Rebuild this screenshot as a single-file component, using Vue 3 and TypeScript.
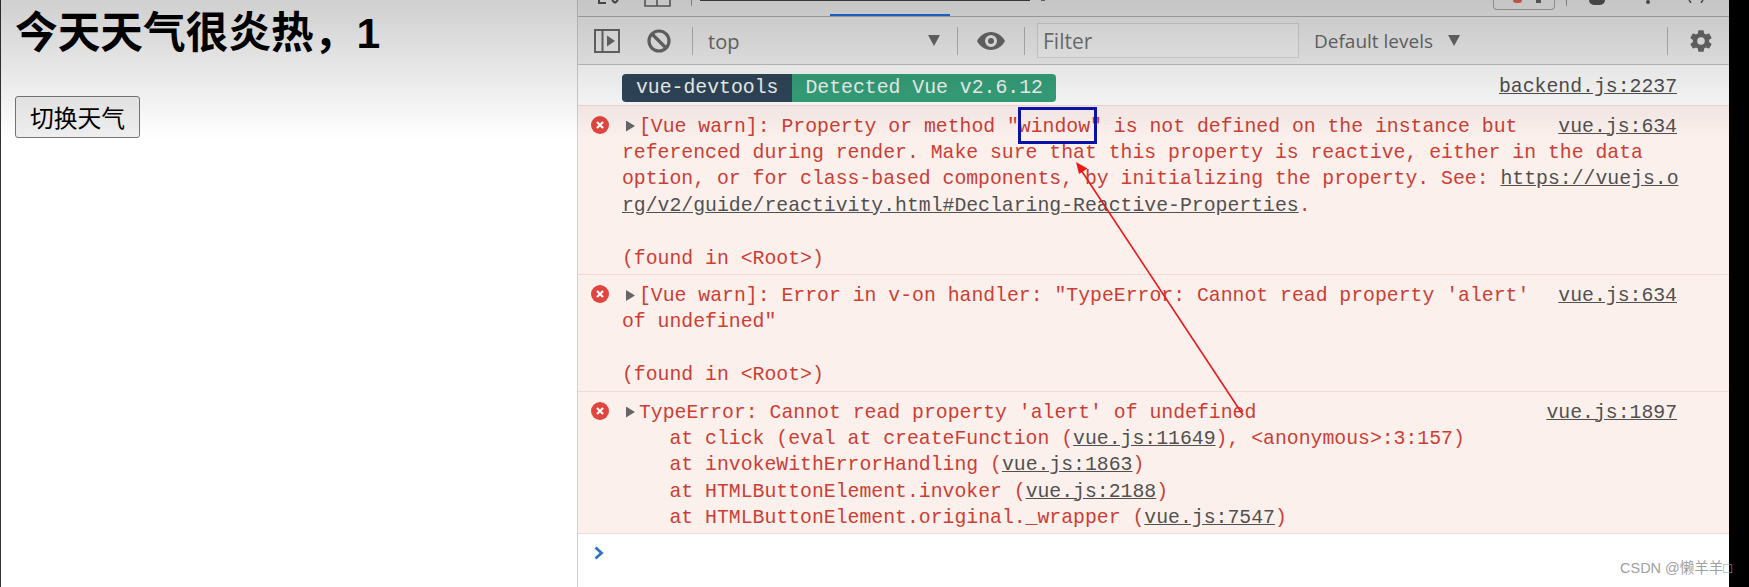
<script setup lang="ts">
const title = '今天天气很炎热\uFF0C1'
</script>

<template>
  <div class="page">
    <section class="demo">
      <h1>{{ title }}</h1>
      <button type="button">切换天气</button>
    </section>

    <section class="devtools">
      <div class="tabs">
        <svg class="t-inspect" width="23" height="4" viewBox="0 0 23 4"><path d="M2 0v3h7M15 0l3 3M21 0l-3 3" fill="none" stroke="#555" stroke-width="2" /></svg>
        <svg class="t-device" width="27" height="7" viewBox="0 0 27 7"><path d="M1 0v6h25V0M13 0v6" fill="none" stroke="#666" stroke-width="1.6" /></svg>
        <i class="t-sep"></i>
        <i class="t-active"></i>
        <i class="t-dot"></i>
        <span class="t-tab t-network">Network</span>
        <span class="t-tab t-perf">Performance</span>
        <span class="t-tab t-vue">Vue</span>
        <span class="t-badge"><i></i><b></b></span>
        <i class="t-sep t-sep2"></i>
        <i class="t-gear"></i>
        <i class="t-dots"></i>
        <svg class="t-close" width="16" height="3" viewBox="0 0 16 3"><path d="M1 0l2 3M15 0l-2 3" stroke="#555" stroke-width="1.5" /></svg>
      </div>

      <div class="toolbar">
        <svg class="i-side" width="26" height="24" viewBox="0 0 26 24">
          <path d="M1 1h24v22H1zM8.500 1v22" fill="none" stroke="#6b6b6b" stroke-width="2" />
          <path d="M13 6.500l8 5.500-8 5.500z" fill="#6b6b6b" />
        </svg>
        <svg class="i-block" width="24" height="24" viewBox="0 0 24 24">
          <circle cx="12" cy="12" r="10" fill="none" stroke="#6b6b6b" stroke-width="3.200" />
          <path d="M5 5l14 14" stroke="#6b6b6b" stroke-width="3.200" />
        </svg>
        <i class="sep sep1"></i>
        <div class="select"><span>top</span><i class="tri"></i></div>
        <i class="sep sep2"></i>
        <svg class="i-eye" width="28" height="18" viewBox="0 0 28 18">
          <path fill-rule="evenodd" fill="#6b6b6b" d="M14 0C8 0 3 3.700 0 9c3 5.300 8 9 14 9s11-3.700 14-9c-3-5.300-8-9-14-9zm0 3a6 6 0 1 1 0 12 6 6 0 0 1 0-12zm0 3a3 3 0 1 0 0 6 3 3 0 0 0 0-6z" />
        </svg>
        <i class="sep sep3"></i>
        <div class="filter">Filter</div>
        <div class="levels"><span>Default levels</span><i class="tri"></i></div>
        <i class="sep sep4"></i>
        <svg class="i-gear" width="26" height="26" viewBox="0 0 24 24">
          <path fill="#6b6b6b" fill-rule="evenodd" d="M19.430 12.980c.04-.32.070-.64.070-.98s-.03-.66-.07-.98l2.110-1.650c.19-.15.240-.42.120-.64l-2-3.460c-.12-.22-.39-.3-.61-.22l-2.490 1c-.52-.4-1.080-.73-1.690-.98l-.38-2.650A.49.49 0 0 0 14 2h-4c-.25 0-.46.18-.49.420l-.38 2.650c-.61.25-1.170.59-1.690.98l-2.490-1c-.23-.09-.49 0-.61.220l-2 3.460c-.13.220-.07.490.12.640l2.110 1.650c-.04.320-.07.650-.07.980s.03.660.07.980l-2.110 1.650c-.19.150-.24.420-.12.640l2 3.460c.12.220.39.300.61.220l2.490-1c.52.400 1.080.730 1.690.980l.38 2.650c.03.240.24.420.49.420h4c.25 0 .46-.18.490-.42l.38-2.650c.61-.25 1.170-.59 1.690-.98l2.490 1c.23.090.49 0 .61-.22l2-3.460c.12-.22.070-.49-.12-.64l-2.110-1.650zM12 15.500a3.500 3.500 0 1 1 0-7 3.500 3.500 0 0 1 0 7z" />
        </svg>
      </div>

      <div class="log">
        <div class="row info">
          <div class="badge"><span class="b-dark">vue-devtools</span><span class="b-green">Detected Vue v2.6.12</span></div>
          <a class="src">backend.js:2237</a>
        </div>

        <div class="row err">
          <svg class="x" width="18" height="18" viewBox="0 0 18 18"><circle cx="9" cy="9" r="9" fill="#e0463f" /><path d="M6 6l6 6M12 6l-6 6" stroke="#fff" stroke-width="2.200" /></svg>
          <div class="msg">
            <div class="line first"><span><i class="arrow"></i>[Vue warn]: Property or method "window" is not defined on the instance but</span><a class="src">vue.js:634</a></div>
            <div class="line">referenced during render. Make sure that this property is reactive, either in the data</div>
            <div class="line">option, or for class-based components, by initializing the property. See: <a>https://vuejs.o</a></div>
            <div class="line"><a>rg/v2/guide/reactivity.html#Declaring-Reactive-Properties</a>.</div>
            <div class="line">&nbsp;</div>
            <div class="line">(found in &lt;Root&gt;)</div>
          </div>
        </div>

        <div class="row err">
          <svg class="x" width="18" height="18" viewBox="0 0 18 18"><circle cx="9" cy="9" r="9" fill="#e0463f" /><path d="M6 6l6 6M12 6l-6 6" stroke="#fff" stroke-width="2.200" /></svg>
          <div class="msg">
            <div class="line first"><span><i class="arrow"></i>[Vue warn]: Error in v-on handler: "TypeError: Cannot read property 'alert'</span><a class="src">vue.js:634</a></div>
            <div class="line">of undefined"</div>
            <div class="line">&nbsp;</div>
            <div class="line">(found in &lt;Root&gt;)</div>
          </div>
        </div>

        <div class="row err err-last">
          <svg class="x" width="18" height="18" viewBox="0 0 18 18"><circle cx="9" cy="9" r="9" fill="#e0463f" /><path d="M6 6l6 6M12 6l-6 6" stroke="#fff" stroke-width="2.200" /></svg>
          <div class="msg">
            <div class="line first"><span><i class="arrow"></i>TypeError: Cannot read property 'alert' of undefined</span><a class="src">vue.js:1897</a></div>
            <div class="line stack">at click (eval at createFunction (<a>vue.js:11649</a>), &lt;anonymous&gt;:3:157)</div>
            <div class="line stack">at invokeWithErrorHandling (<a>vue.js:1863</a>)</div>
            <div class="line stack">at HTMLButtonElement.invoker (<a>vue.js:2188</a>)</div>
            <div class="line stack">at HTMLButtonElement.original._wrapper (<a>vue.js:7547</a>)</div>
          </div>
        </div>

        <div class="prompt">
          <svg width="12" height="14" viewBox="0 0 12 14"><path d="M2.500 1.500L8.500 7l-6 5.500" fill="none" stroke="#2f74c0" stroke-width="2.800" /></svg>
        </div>
      </div>
    </section>

    <div class="edge"></div>

    <div class="shade"></div>
    <svg class="marks" width="1749" height="587" viewBox="0 0 1749 587">
      <rect x="1019.500" y="108.500" width="76" height="34" fill="none" stroke="#0a12a8" stroke-width="3" />
      <path d="M1243 415L1081 170" stroke="#e8181c" stroke-width="1.600" fill="none" />
      <path d="M1076 162l11.500 6.500-8.500 5.500z" fill="#e8181c" />
    </svg>
    <div class="mark-text">CSDN @懒羊羊□</div>
  </div>
</template>

<style>
html,
body {
  margin: 0;
  background: #fff;
}
</style>

<style scoped>
.page {
  position: relative;
  display: flex;
  width: 1749px;
  height: 587px;
  overflow: hidden;
  background: #fff;
  color: #000;
}
.demo {
  box-sizing: border-box;
  width: 577px;
  flex: none;
  padding: 8px 0 0 14px;
  border-left: 1px solid #333;
  font-family: "Liberation Sans", "Noto Sans CJK SC", sans-serif;
}
h1 {
  margin: 0;
  font-size: 42.700px;
  line-height: 51px;
  font-weight: 700;
}
button {
  display: block;
  box-sizing: border-box;
  width: 125px;
  height: 42px;
  margin: 37px 0 0;
  padding: 0;
  border: 1px solid #767676;
  border-radius: 3px;
  background: #efefef;
  color: #000;
  font-family: "Noto Sans CJK SC", sans-serif;
  font-size: 23.800px;
  line-height: 38px;
}
.devtools {
  flex: 1;
  min-width: 0;
  border-left: 1px solid #cfcfcf;
  background: #fff;
  display: flex;
  flex-direction: column;
}

/* clipped tab strip */
.tabs {
  position: relative;
  box-sizing: border-box;
  flex: none;
  height: 17px;
  display: flex;
  align-items: flex-start;
  overflow: hidden;
  background: #f3f3f3;
  border-bottom: 1px solid #b4b4b4;
  font-family: "Open Sans", sans-serif;
  color: #666;
}
.tabs::after {
  content: "";
  position: absolute;
  left: 252px;
  bottom: 0;
  width: 120px;
  height: 2px;
  background: #1a73e8;
}
.tabs i {
  display: block;
  flex: none;
}
.t-inspect {
  flex: none;
  margin-left: 19px;
}
.t-device {
  flex: none;
  margin-left: 24px;
}
.t-sep {
  width: 1px;
  height: 6px;
  margin-left: 20px;
  background: #9a9a9a;
}
.t-active {
  width: 330px;
  height: 1px;
  margin-left: 8px;
  background: #444;
}
.t-dot {
  width: 4px;
  height: 1px;
  margin-left: 11px;
  background: #777;
}
.t-tab {
  flex: none;
  font-size: 20px;
  line-height: 20px;
  margin-top: -18px;
}
.t-network {
  width: 127px;
  margin-left: 42px;
}
.t-perf {
  width: 163px;
}
.t-vue {
  width: 116px;
}
.t-badge {
  box-sizing: border-box;
  flex: none;
  width: 62px;
  height: 10px;
  display: flex;
  gap: 14px;
  padding-left: 19px;
  border: 1px solid #aaa;
  border-top: 0;
  border-radius: 0 0 4px 4px;
}
.tabs .t-badge i {
  width: 9px;
  height: 3px;
  border-radius: 0 0 5px 5px;
  background: #e8655f;
}
.t-badge b {
  display: block;
  width: 5px;
  height: 3px;
  background: #666;
}
.tabs .t-sep2 {
  margin-left: 11px;
}
.tabs .t-gear {
  width: 16px;
  height: 5px;
  margin-left: 22px;
  border-radius: 0 0 8px 8px;
  background: #555;
}
.tabs .t-dots {
  width: 4px;
  height: 4px;
  margin-left: 41px;
  border-radius: 50%;
  background: #555;
}
.t-close {
  flex: none;
  margin-left: 38px;
}

/* console toolbar */
.toolbar {
  box-sizing: border-box;
  flex: none;
  height: 48px;
  display: flex;
  align-items: center;
  background: #f3f3f3;
  border-bottom: 1px solid #c4c4c4;
  font-family: "Open Sans", sans-serif;
  font-size: 20px;
  color: #6b6b6b;
}
.toolbar svg {
  flex: none;
}
.i-side {
  margin-left: 16px;
}
.i-block {
  margin-left: 27px;
}
.sep {
  display: block;
  flex: none;
  width: 1px;
  height: 28px;
  background: #b8b8b8;
}
.sep1 {
  margin-left: 21px;
}
.select {
  box-sizing: border-box;
  width: 232px;
  margin-left: 15px;
  display: flex;
  align-items: center;
  justify-content: space-between;
}
.select span {
  position: relative;
  top: 1px;
}
.tri {
  display: block;
  width: 12px;
  height: 11px;
  background: #6b6b6b;
  clip-path: polygon(0 0, 100% 0, 50% 100%);
}
.sep2 {
  margin-left: 17px;
}
.i-eye {
  margin-left: 19px;
}
.sep3 {
  margin-left: 19px;
}
.filter {
  box-sizing: border-box;
  width: 262px;
  height: 35px;
  margin-left: 12px;
  padding-left: 5px;
  border: 1px solid #dadada;
  background: #f7f7f7;
  color: #777;
  font-size: 21px;
  line-height: 35px;
}
.levels {
  display: flex;
  align-items: center;
  gap: 15px;
  margin-left: 15px;
  font-size: 19px;
}
.sep4 {
  margin-left: 207px;
}
.i-gear {
  margin-left: 20px;
}

/* log */
.log {
  flex: 1;
  display: flex;
  flex-direction: column;
  font-family: "Liberation Mono", monospace;
  font-size: 19.800px;
  line-height: 26.400px;
}
.info {
  box-sizing: border-box;
  height: 40px;
  display: flex;
  align-items: flex-start;
  justify-content: space-between;
  padding: 9px 52px 0 44px;
}
.badge {
  display: flex;
  height: 28px;
  line-height: 28px;
  border-radius: 4px;
  overflow: hidden;
  color: #f2f7f5;
}
.b-dark {
  padding: 0 14px;
  background: #2f4659;
}
.b-green {
  padding: 0 13px;
  background: #36a27b;
}
.src,
a {
  color: #505050;
  text-decoration: underline;
}
.err {
  display: flex;
  align-items: flex-start;
  padding-top: 7.500px;
  padding-bottom: 2.500px;
  border-top: 1px solid #f6d8d4;
  background: #fcf0ed;
  color: #cc3e34;
}
.err-last {
  padding-bottom: 1px;
}
.x {
  flex: none;
  margin: 2px 13px 0 13px;
}
.msg {
  width: 1070px;
  flex: none;
}
.line {
  white-space: pre;
}
.first {
  display: flex;
  justify-content: space-between;
  padding-right: 15px;
}
.stack {
  padding-left: 47.500px;
}
.arrow {
  display: inline-block;
  width: 9px;
  height: 11px;
  margin: 0 4px 0 4px;
  background: #666;
  clip-path: polygon(0 0, 100% 50%, 0 100%);
}
.prompt {
  flex: 1;
  border-top: 1px solid #f6d8d4;
  padding: 8px 0 0 15px;
  background: #fff;
}

.edge {
  flex: none;
  width: 20px;
  background: #000;
}
.shade {
  position: absolute;
  left: 0;
  top: 0;
  width: 1729px;
  height: 140px;
  background: linear-gradient(rgba(0, 0, 0, 0.19), rgba(0, 0, 0, 0));
  pointer-events: none;
}
.marks {
  position: absolute;
  left: 0;
  top: 0;
  pointer-events: none;
}
.mark-text {
  position: absolute;
  left: 1620px;
  top: 558px;
  font-family: "Liberation Sans", "Noto Sans CJK SC", sans-serif;
  font-size: 14.500px;
  line-height: 20px;
  color: #a0a0a0;
  white-space: nowrap;
}
</style>
